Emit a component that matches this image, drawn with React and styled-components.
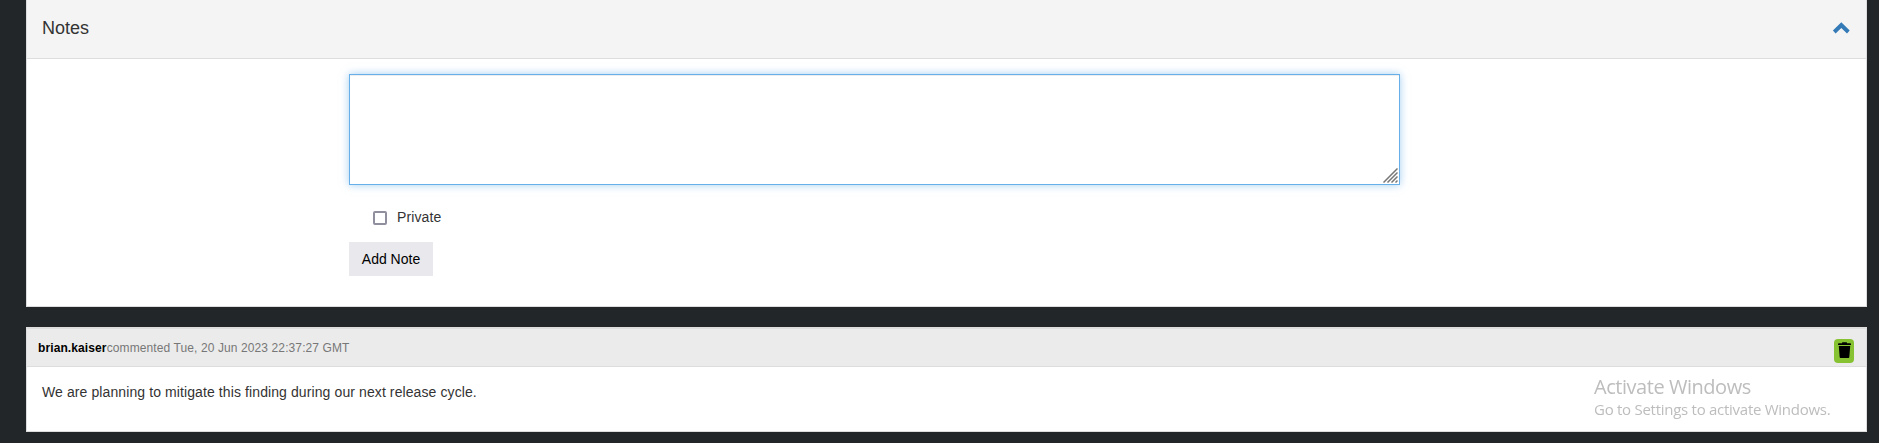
import React from 'react';
import styled, { createGlobalStyle } from 'styled-components';

const GlobalStyle = createGlobalStyle`
  * { box-sizing: border-box; }
  html, body { margin: 0; background: #222629; overflow: hidden; }
  body { font: 14px/20px "Liberation Sans", Arial, sans-serif; color: #333; }
`;

const Page = styled.main`
  height: 443px;
  padding: 0 12px 0 26px;
  display: flex;
  flex-direction: column;
  gap: 20px;
  overflow: hidden;
`;

const Panel = styled.section`
  background: #fff;
  border: 1px solid #ddd;
  border-top-width: ${(p) => (p.$open ? 0 : '1px')};
  height: ${(p) => p.$height}px;
`;

const PanelHeading = styled.header`
  height: 59px;
  padding: 0 16px 3px 15px;
  display: flex;
  align-items: center;
  justify-content: space-between;
  background: #f4f4f4;
  border-bottom: 1px solid #ddd;
`;

const Title = styled.h4`
  margin: 0;
  font-size: 18px;
  font-weight: 400;
  line-height: 20px;
`;

const Toggle = styled.a`
  display: flex;
  padding-top: 1px;
  color: #337ab7;
`;

const NoteForm = styled.form`
  width: 1051px;
  margin: 15px 0 0 322px;
  display: flex;
  flex-direction: column;
  align-items: flex-start;
`;

const NoteField = styled.div`
  width: 100%;
  height: 111px;
  display: flex;
  align-items: flex-end;
  justify-content: flex-end;
  padding: 0 1px 1px 0;
  border: 1px solid #66afe9;
  box-shadow: inset 0 1px 1px rgba(0, 0, 0, 0.075), 0 0 8px rgba(102, 175, 233, 0.6);
`;

const PrivateLabel = styled.label`
  display: flex;
  align-items: center;
  gap: 10px;
  height: 20px;
  margin: 23px 0 14px 24px;
`;

const PrivateText = styled.span`
  padding-bottom: 2px;
  letter-spacing: 0.1px;
`;

const Checkbox = styled.input`
  appearance: none;
  width: 14px;
  height: 14px;
  margin: 0;
  background: #fff;
  border: 2px solid #8f8f9d;
  border-radius: 2px;
`;

const AddButton = styled.button`
  width: 84px;
  height: 34px;
  padding: 0;
  border: 0;
  background: #e9e9ed;
  color: #000;
  font: 14px/20px "Liberation Sans", Arial, sans-serif;
`;

const CommentHeading = styled.header`
  height: 39px;
  padding: 0 12px 0 11px;
  display: flex;
  justify-content: space-between;
  align-items: flex-start;
  background: #ebebeb;
  border-top: 1px solid #ddd;
  border-bottom: 1px solid #ddd;
`;

const Meta = styled.p`
  margin: 9px 0 0;
  font-size: 12px;
  line-height: 20px;
  letter-spacing: 0.105px;
  color: #777;
`;

const Author = styled.strong`
  color: #000;
`;

const DeleteButton = styled.button`
  width: 20px;
  height: 24px;
  margin-top: 10px;
  padding: 3px 0 0 4px;
  display: flex;
  align-items: flex-start;
  border: 0;
  border-radius: 4px;
  background: #86c232;
`;

const CommentText = styled.p`
  margin: 15px 15px 0;
  letter-spacing: 0.1px;
`;

const Watermark = styled.aside`
  position: fixed;
  left: 1594px;
  top: 374px;
  color: #bdbdbd;
  font-family: "Open Sans", "Noto Sans", sans-serif;
  white-space: nowrap;
`;

const WatermarkTitle = styled.div`
  font-size: 20px;
  line-height: 25px;
  letter-spacing: -0.46px;
`;

const WatermarkHint = styled.div`
  font-size: 15px;
  line-height: 20px;
  letter-spacing: -0.27px;
`;

const ChevronUp = () => (
  <svg width="18" height="12" viewBox="0 0 18 12" fill="currentColor">
    <path d="M9.3 0.3L17.7 8.6L15 11.5L9.3 6L3.6 11.5L0.9 8.6Z" />
  </svg>
);

const ResizeGrip = () => (
  <svg width="15" height="15" viewBox="0 0 15 15" stroke="#777" strokeWidth="1.5">
    <path d="M0.5 14.5L14.5 0.5M4.5 14.5L14.5 4.5M8.5 14.5L14.5 8.5M12.5 14.5L14.5 12.5" />
  </svg>
);

const Trash = () => (
  <svg width="13" height="16" viewBox="0 0 13 16" fill="#000">
    <path d="M0 2Q0 1.2 1 1.2H4V0.8Q4 0.3 4.6 0.3H8.4Q9 0.3 9 0.8V1.2H12Q13 1.2 13 2V3H0ZM0.8 4H12.2L11.3 15.2Q11.2 16 10.5 16H2.5Q1.8 16 1.7 15.2Z" />
  </svg>
);

export default function App() {
  return (
    <>
      <GlobalStyle />
      <Page>
        <Panel $open $height={307}>
          <PanelHeading>
            <Title>Notes</Title>
            <Toggle aria-label="Collapse notes"><ChevronUp /></Toggle>
          </PanelHeading>
          <NoteForm>
            <NoteField role="textbox" aria-label="Note"><ResizeGrip /></NoteField>
            <PrivateLabel><Checkbox type="checkbox" /><PrivateText>Private</PrivateText></PrivateLabel>
            <AddButton type="button">Add Note</AddButton>
          </NoteForm>
        </Panel>
        <Panel $height={105}>
          <CommentHeading>
            <Meta><Author>brian.kaiser</Author>commented Tue, 20 Jun 2023 22:37:27 GMT</Meta>
            <DeleteButton aria-label="Delete note"><Trash /></DeleteButton>
          </CommentHeading>
          <CommentText>We are planning to mitigate this finding during our next release cycle.</CommentText>
        </Panel>
      </Page>
      <Watermark>
        <WatermarkTitle>Activate Windows</WatermarkTitle>
        <WatermarkHint>Go to Settings to activate Windows.</WatermarkHint>
      </Watermark>
    </>
  );
}
